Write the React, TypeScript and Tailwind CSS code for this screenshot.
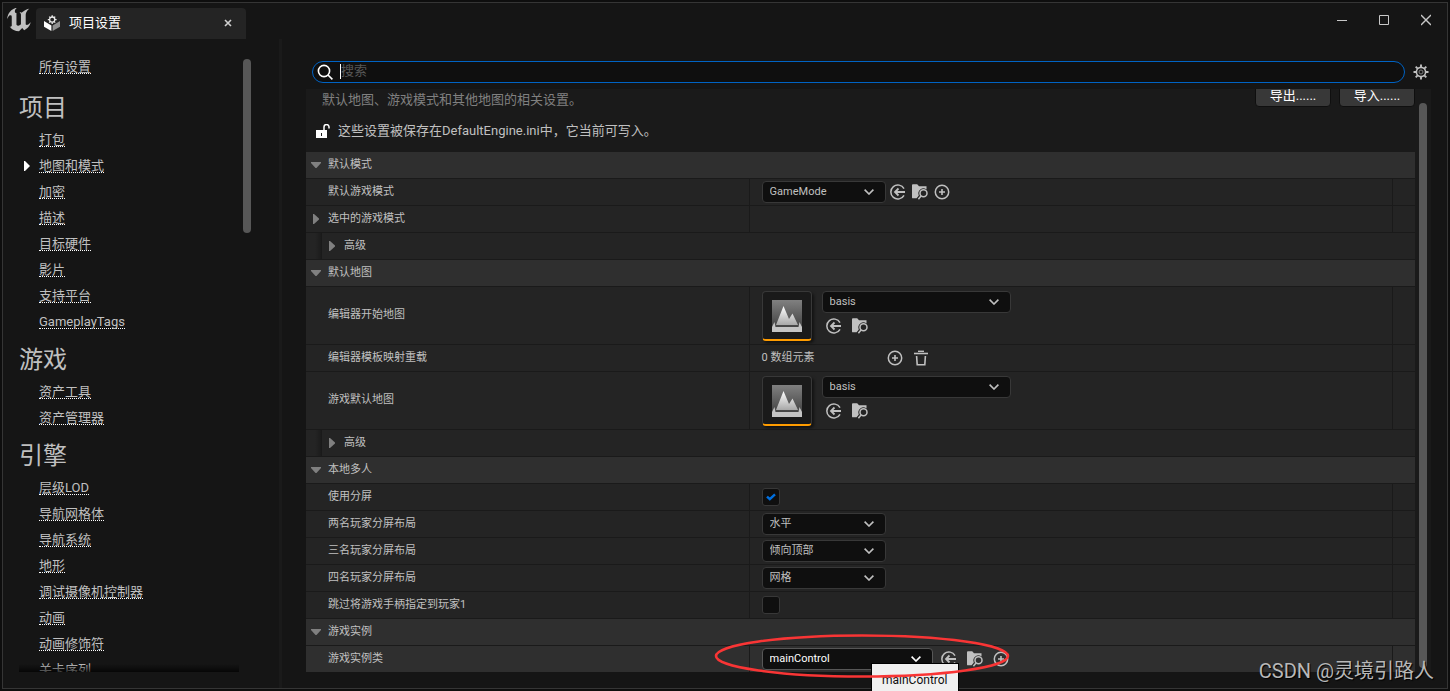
import { ReactNode, useId, useState } from "react";

const NAV = [
  {
    title: "项目",
    items: ["打包", "地图和模式", "加密", "描述", "目标硬件", "影片", "支持平台", "GameplayTags"],
  },
  { title: "游戏", items: ["资产工具", "资产管理器"] },
  {
    title: "引擎",
    items: [
      "层级LOD",
      "导航网格体",
      "导航系统",
      "地形",
      "调试摄像机控制器",
      "动画",
      "动画修饰符",
      "关卡序列",
    ],
  },
];

export default function App() {
  return (
    <div className="relative h-screen overflow-hidden bg-[#0e0e0e] p-0.5 font-['Roboto','Noto_Sans_CJK_SC',sans-serif] text-[13px] text-[#c0c0c0]">
      <div className="flex h-full flex-col border border-[#353535] bg-[#151515]">
        <TitleBar />
        <div className="flex min-h-0 flex-1">
          <Sidebar />
          <div className="w-[3px] shrink-0 bg-[#1a1a1a]" />
          <main className="flex min-w-0 flex-1 flex-col pt-[22px] pr-4 pb-4 pl-6">
            <SearchRow />
            <Details />
          </main>
        </div>
      </div>
      <Annotations />
    </div>
  );
}

function TitleBar() {
  return (
    <header className="flex h-9 shrink-0 items-end">
      <svg viewBox="4.5 5.2 14.8 14.4" className="mb-[7px] ml-1 h-6 w-6" fill="#c0c0c0">
        <path d="M19.13 13.729c-.206.997-1.126 3.557-4.06 4.942l-1.179-1.325-1.988 2a7.338 7.338 0 0 1-5.804-2.978 2.859 2.859 0 0 0 .65.123c.326.006.678-.114.678-.66v-5.394a.89.89 0 0 0-1.116-.89c-.92.212-1.656 2.509-1.656 2.509a7.304 7.304 0 0 1 2.528-5.597 7.408 7.408 0 0 1 3.73-1.721c-1.006.573-1.57 1.507-1.57 2.29 0 1.262.76 1.109.984.923v7.28a1.157 1.157 0 0 0 .148.256 1.075 1.075 0 0 0 .88.445c.76 0 1.747-.868 1.747-.868V9.172c0-.6-.452-1.324-.905-1.572 0 0 .838-.149 1.484.346a5.537 5.537 0 0 1 .387-.425c1.508-1.48 2.929-1.902 4.112-2.112 0 0-2.151 1.69-2.151 3.96 0 1.687.043 5.801.043 5.801.799.771 1.986-.342 3.059-1.441z" />
      </svg>
      <div className="ml-[5px] flex h-[31px] w-[210px] items-center rounded-t bg-[#242424] pr-3 pb-px pl-2">
        <svg viewBox="0 0 16 16" className="h-4 w-4">
          <path d="M0 6l7.4 4.4V16L0 11.8z" fill="#fff" />
          <path d="M16 6l-7.4 4.4V16l7.4-4.2z" fill="#909090" />
          <circle cx="8.2" cy="4.6" r="2.6" fill="none" stroke="#e8e8e8" strokeWidth="1.3" />
          <path
            d="M8.2 2V.2M8.2 7.2V9M5.6 4.6H3.8M10.8 4.6h1.8M6.4 2.8L5.2 1.6M10 2.8l1.2-1.2M6.4 6.4L5.2 7.6M10 6.4l1.2 1.2"
            stroke="#e8e8e8"
            strokeWidth="1.3"
          />
        </svg>
        <h1 className="ml-[9px] flex-1 text-white">项目设置</h1>
        <button aria-label="关闭标签页" className="flex h-3 w-3 items-center justify-center">
          <svg viewBox="0 0 8 8" className="h-2 w-2" stroke="#d0d0d0" strokeWidth="1.6">
            <path d="M1 1l6 6M7 1L1 7" />
          </svg>
        </button>
      </div>
      <div className="mr-4 mb-3 ml-auto flex items-center gap-8">
        <button aria-label="最小化">
          <svg viewBox="0 0 10 14" className="h-3.5 w-2.5" stroke="#c8c8c8">
            <path d="M0 7.5h10" />
          </svg>
        </button>
        <button aria-label="最大化">
          <svg viewBox="0 0 10 14" className="h-3.5 w-2.5" stroke="#c8c8c8" fill="none">
            <path d="M.5 2.5h9v9h-9z" />
          </svg>
        </button>
        <button aria-label="关闭">
          <svg viewBox="0 0 10 14" className="h-3.5 w-2.5" stroke="#c8c8c8" strokeWidth="1.4">
            <path d="M0 2l10 10M10 2L0 12" />
          </svg>
        </button>
      </div>
    </header>
  );
}

function Sidebar() {
  const [current, setCurrent] = useState("地图和模式");

  return (
    <nav className="flex w-[276px] shrink-0 pb-4 pl-4">
      <div className="relative w-[220px] overflow-hidden pt-[15px]">
        <div className="mb-[3px]">
          <NavLink label="所有设置" active={false} onSelect={setCurrent} />
        </div>
        {NAV.map((section) => (
          <section key={section.title}>
            <h2 className="flex h-11 items-center pt-1.5 text-2xl leading-6">{section.title}</h2>
            {section.items.map((item) => (
              <NavLink key={item} label={item} active={item === current} onSelect={setCurrent} />
            ))}
          </section>
        ))}
        <div className="absolute inset-x-0 bottom-0 h-2 bg-linear-to-b from-transparent to-black/70" />
      </div>
      <div className="mt-5 ml-1 h-[174px] w-2 rounded-full bg-[#575757]" />
    </nav>
  );
}

function NavLink({
  label,
  active,
  onSelect,
}: {
  label: string;
  active: boolean;
  onSelect: (label: string) => void;
}) {
  return (
    <div className="flex h-[26px] items-center">
      <span className="flex w-5 shrink-0 pl-[5px]">
        {active && (
          <svg viewBox="0 0 6 10" className="h-2.5 w-1.5" fill="#fff">
            <path d="M0 0h1l5 5-5 5H0z" />
          </svg>
        )}
      </span>
      <a
        href="#"
        onClick={(e) => {
          e.preventDefault();
          onSelect(label);
        }}
        className="border-b border-dotted border-white leading-[13px] whitespace-nowrap"
      >
        {label}
      </a>
    </div>
  );
}

function SearchRow() {
  return (
    <div className="mb-1.5 flex items-center gap-2 pr-0.5 pl-1.5">
      <label className="flex h-[22px] min-w-0 flex-1 items-center rounded-full border border-[#0063c4] bg-[#0f0f0f] pl-1">
        <svg viewBox="0 0 16 16" className="h-4 w-4 shrink-0" fill="none" stroke="#fff" strokeWidth="1.6">
          <circle cx="7" cy="7" r="5.6" />
          <path d="M11 11l4.4 4.4" />
        </svg>
        <span className="mb-0.5 ml-[7px] h-[15px] w-px shrink-0 bg-white" />
        <input
          type="text"
          aria-label="搜索"
          placeholder="搜索"
          className="h-5 min-w-0 flex-1 bg-transparent pb-1 leading-4 outline-none placeholder:text-[#575757]"
        />
      </label>
      <button aria-label="设置" className="h-4 w-4 shrink-0">
        <svg viewBox="0 0 16 16" className="h-4 w-4" fill="none" stroke="#c0c0c0">
          <circle cx="8" cy="8" r="4.6" strokeWidth="1.6" />
          <circle cx="8" cy="8" r="2" stroke="#808080" />
          <path
            d="M8 .5v3M8 12.5v3M.5 8h3M12.5 8h3M2.7 2.7l2 2M11.3 11.3l2 2M13.3 2.7l-2 2M4.7 11.3l-2 2"
            strokeWidth="1.9"
          />
        </svg>
      </button>
    </div>
  );
}

function Details() {
  return (
    <div className="flex min-h-0 flex-1 bg-[#1a1a1a]">
      <div className="min-w-0 flex-1 overflow-hidden">
        <div className="-mt-1 flex items-start justify-between pl-4">
          <p className="pt-[5px] leading-5 text-[#808080]">
            默认地图、游戏模式和其他地图的相关设置。
          </p>
          <div className="flex gap-2">
            <ToolButton label="导出......" />
            <ToolButton label="导入......" />
          </div>
        </div>
        <div className="my-[11px] flex items-center gap-2 pl-2.5 leading-5">
          <svg viewBox="0 0 14 14" className="h-3.5 w-3.5" fill="#fff">
            <path d="M0 6h11v8H0zM5 9v3h1V9z" fillRule="evenodd" />
            <path d="M8 6V3a2.5 2.5 0 0 1 5 0v1.5" fill="none" stroke="#fff" strokeWidth="1.5" />
          </svg>
          <p>这些设置被保存在DefaultEngine.ini中，它当前可写入。</p>
        </div>

        <Category title="默认模式">
          <Row label="默认游戏模式">
            {(id) => (
              <div className="flex items-center gap-1">
                <Combo id={id} value="GameMode" width="w-[124px]" />
                <div className="flex gap-1.5">
                  <UseSelectedButton />
                  <BrowseButton />
                  <AddButton />
                </div>
              </div>
            )}
          </Row>
          <Row label="选中的游戏模式" expandable />
          <AdvancedRow />
        </Category>

        <Category title="默认地图">
          <Row label="编辑器开始地图" tall>
            {(id) => <MapPicker id={id} />}
          </Row>
          <Row label="编辑器模板映射重载">
            {() => (
              <div className="flex items-center gap-2.5">
                <span className="w-[115px]">0 数组元素</span>
                <AddButton />
                <button aria-label="清空" className="h-4 w-4">
                  <svg viewBox="0 0 16 16" className="h-4 w-4" fill="none" stroke="#c0c0c0">
                    <path d="M1 3.5h14" strokeWidth="1.6" />
                    <path d="M5 1.3h6" strokeWidth="1.4" />
                    <path d="M3.6 6l.6 8.8h7.6l.6-8.8" strokeWidth="1.6" />
                  </svg>
                </button>
              </div>
            )}
          </Row>
          <Row label="游戏默认地图" tall>
            {(id) => <MapPicker id={id} />}
          </Row>
          <AdvancedRow />
        </Category>

        <Category title="本地多人">
          <Row label="使用分屏">{(id) => <Check id={id} initial />}</Row>
          <Row label="两名玩家分屏布局">
            {(id) => <Combo id={id} value="水平" width="w-[124px]" />}
          </Row>
          <Row label="三名玩家分屏布局">
            {(id) => <Combo id={id} value="倾向顶部" width="w-[124px]" />}
          </Row>
          <Row label="四名玩家分屏布局">
            {(id) => <Combo id={id} value="网格" width="w-[124px]" />}
          </Row>
          <Row label="跳过将游戏手柄指定到玩家1">{(id) => <Check id={id} />}</Row>
        </Category>

        <Category title="游戏实例">
          <Row label="游戏实例类" hovered>
            {(id) => (
              <div className="flex items-center gap-2">
                <Combo id={id} value="mainControl" width="w-[171px]" hovered />
                <div className="flex gap-2.5">
                  <UseSelectedButton />
                  <BrowseButton />
                  <AddButton />
                </div>
              </div>
            )}
          </Row>
        </Category>
      </div>
      <div className="mx-1 mt-3.5 mb-1 w-2 shrink-0 rounded-full bg-[#575757]" />
    </div>
  );
}

function ToolButton({ label }: { label: string }) {
  return (
    <button className="h-[22px] w-[76px] rounded border border-[#0f0f0f] bg-[#383838] leading-5 text-white">
      {label}
    </button>
  );
}

function Category({ title, children }: { title: string; children: ReactNode }) {
  const [open, setOpen] = useState(true);

  return (
    <section className="text-[11px]">
      <h3 className="mb-px bg-[#2f2f2f]">
        <button
          aria-expanded={open}
          onClick={() => setOpen(!open)}
          className="flex h-[26px] w-full items-center gap-[7px] pl-[5px]"
        >
          <svg viewBox="0 0 10 6" className="h-1.5 w-2.5" fill="#808080">
            <path d={open ? "M0 0h10v1L5.5 6h-1L0 1z" : "M3 0l4 3-4 3z"} />
          </svg>
          {title}
        </button>
      </h3>
      {open && children}
    </section>
  );
}

function Row({
  label,
  children,
  expandable,
  tall,
  hovered,
}: {
  label: string;
  children?: (id: string) => ReactNode;
  expandable?: boolean;
  tall?: boolean;
  hovered?: boolean;
}) {
  const id = useId();

  return (
    <div
      className={`mb-px flex ${tall ? "h-[57px]" : "h-[26px]"} ${hovered ? "bg-[#2f2f2f]" : "bg-[#242424]"}`}
    >
      <div className="flex w-2/5 shrink-0 items-center border-r border-[#1a1a1a]">
        <span className="flex w-[22px] shrink-0 pl-[7px]">{expandable && <RightArrow />}</span>
        <label htmlFor={id}>{label}</label>
      </div>
      <div className="flex min-w-0 flex-1 items-center pl-3">{children?.(id)}</div>
      <div className="w-[23px] shrink-0 border-l border-[#1a1a1a]" />
    </div>
  );
}

function AdvancedRow() {
  return (
    <div className="mb-px flex h-[26px] bg-[#242424]">
      <div className="w-4 shrink-0 border-r border-[#1a1a1a] bg-linear-to-r from-[#242424] from-60% to-[#1c1c1c]" />
      <button className="flex flex-1 items-center gap-[9px] pl-[7px]">
        <RightArrow />
        高级
      </button>
    </div>
  );
}

function RightArrow() {
  return (
    <svg viewBox="0 0 6 10" className="h-2.5 w-1.5" fill="#808080">
      <path d="M0 0h1l5 4.5v1L1 10H0z" />
    </svg>
  );
}

function Combo({
  id,
  value,
  width,
  hovered,
}: {
  id: string;
  value: string;
  width: string;
  hovered?: boolean;
}) {
  return (
    <div className={`relative h-[22px] ${width}`}>
      <select
        id={id}
        className={`h-full w-full appearance-none rounded border bg-[#0f0f0f] pl-[7px] leading-5 outline-none ${
          hovered ? "border-[#575757] text-white" : "border-[#383838]"
        }`}
      >
        <option>{value}</option>
      </select>
      <svg
        viewBox="0 0 10 6"
        className="pointer-events-none absolute top-2 right-3 h-1.5 w-2.5"
        fill="none"
        stroke={hovered ? "#fff" : "#c0c0c0"}
        strokeWidth="1.6"
      >
        <path d="M.6.6L5 5 9.4.6" />
      </svg>
    </div>
  );
}

function Check({ id, initial = false }: { id: string; initial?: boolean }) {
  const [checked, setChecked] = useState(initial);

  return (
    <div className="relative h-[18px] w-[18px]">
      <input
        id={id}
        type="checkbox"
        checked={checked}
        onChange={(e) => setChecked(e.target.checked)}
        className="block h-full w-full appearance-none rounded-[3px] border border-[#383838] bg-[#0f0f0f]"
      />
      {checked && (
        <svg
          viewBox="0 0 10 8"
          className="pointer-events-none absolute top-[5px] left-1 h-2 w-2.5"
          fill="none"
          stroke="#0070e0"
          strokeWidth="2.4"
        >
          <path d="M1 3.6l2.8 2.6L9 1.4" />
        </svg>
      )}
    </div>
  );
}

function MapPicker({ id }: { id: string }) {
  const gradient = useId();

  return (
    <div className="flex gap-2.5 self-start pt-1">
      <div className="flex h-[50px] w-[50px] justify-center rounded border border-b-2 border-[#383838] border-b-[#ff9c00] bg-[#1a1a1a] pt-2 shadow-[2px_2px_3px_rgba(0,0,0,0.5)]">
        <svg viewBox="0 0 30 32" className="h-8 w-[30px]">
          <defs>
            <linearGradient id={`${gradient}sky`} x1="0" y1="0" x2="0" y2="1">
              <stop offset="0" stopColor="#808080" />
              <stop offset="1" stopColor="#3a3a3a" />
            </linearGradient>
            <linearGradient id={`${gradient}hill`} x1="0" y1="0" x2="0" y2="1">
              <stop offset="0" stopColor="#ffffff" />
              <stop offset="1" stopColor="#a8a8a8" />
            </linearGradient>
          </defs>
          <path d="M0 0h30v32H0z" fill={`url(#${gradient}sky)`} />
          <path d="M4 25L11.5 6l5.5 13 3.5-5.5L26 25z" fill={`url(#${gradient}hill)`} />
          <path d="M0 32V27l2.5-5 1 5h23l1-5L30 27v5z" fill="#c4c4c4" />
        </svg>
      </div>
      <div>
        <Combo id={id} value="basis" width="w-[189px]" />
        <div className="mt-[5px] flex gap-2.5 pl-1">
          <UseSelectedButton />
          <BrowseButton />
        </div>
      </div>
    </div>
  );
}

function UseSelectedButton() {
  return (
    <button aria-label="使用选中项" className="h-4 w-4">
      <svg viewBox="0 0 16 16" className="h-4 w-4" fill="none" stroke="#c0c0c0" strokeWidth="1.5">
        <path d="M14 4.7A7 7 0 1 0 14 11.3" />
        <path d="M15 8H5M8.5 4.5L5 8l3.5 3.5" strokeWidth="1.8" />
      </svg>
    </button>
  );
}

function BrowseButton() {
  return (
    <button aria-label="浏览" className="h-4 w-4">
      <svg viewBox="0 0 16 16" className="h-4 w-4">
        <path
          d="M0 1.2Q0 .3.9.3H5.2L7 2.3h7.5V5.6A5 5 0 0 0 6.8 11.5L4.6 14.3H.9Q0 14.3 0 13.4z"
          fill="#c0c0c0"
        />
        <circle cx="11.5" cy="9.3" r="3.5" fill="none" stroke="#c0c0c0" strokeWidth="1.5" />
        <path d="M9 12l-2.6 3.3" stroke="#c0c0c0" strokeWidth="1.5" />
      </svg>
    </button>
  );
}

function AddButton() {
  return (
    <button aria-label="添加" className="h-4 w-4">
      <svg viewBox="0 0 16 16" className="h-4 w-4" fill="none" stroke="#c0c0c0">
        <circle cx="8" cy="8" r="6.7" strokeWidth="1.5" />
        <path d="M8 5v6M5 8h6" strokeWidth="1.6" />
      </svg>
    </button>
  );
}

// Everything that floats over the window: tooltip, red marker and watermark
function Annotations() {
  return (
    <>
      <div
        role="tooltip"
        className="absolute bottom-0 left-[871px] h-7 border-t border-l border-black bg-[#f0f0f0] px-2.5 pt-1.5 text-xs leading-5 text-[#101010] shadow-[1px_0_0_#000]"
      >
        mainControl
      </div>
      <svg
        viewBox="0 0 296 46"
        className="pointer-events-none absolute bottom-3 left-[714px] h-[46px] w-[296px]"
        fill="none"
        stroke="#f93535"
        strokeWidth="2.6"
      >
        <ellipse cx="148" cy="23" rx="146" ry="20.5" />
      </svg>
      <p className="absolute right-4 bottom-2 text-xl leading-6 text-[#b8b8b8] [text-shadow:1px_1px_1px_#000]">
        CSDN @灵境引路人
      </p>
    </>
  );
}
